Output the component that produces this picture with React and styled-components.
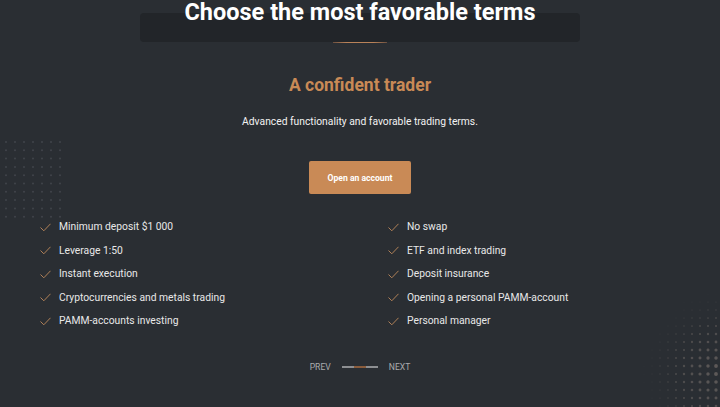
import React from "react";
import styled, { createGlobalStyle } from "styled-components";

const Global = createGlobalStyle`
  html, body { margin: 0; padding: 0; background: #2a2e33; }
  body { font-family: Roboto, "Liberation Sans", Arial, sans-serif; }
`;

const Page = styled.section`
  position: relative;
  width: 720px;
  height: 407px;
  overflow: hidden;
  background: #2a2e33;
  display: flex;
  flex-direction: column;
  align-items: center;
`;

const Decor = styled.svg`
  position: absolute;
  pointer-events: none;
`;

const Header = styled.header`
  position: relative;
  width: 440px;
  display: flex;
  flex-direction: column;
  align-items: center;
  margin-top: -2px;
  &::before {
    content: "";
    position: absolute;
    left: 0;
    right: 0;
    top: 15px;
    height: 29px;
    background: #222529;
    border-radius: 4px;
  }
`;

const Title = styled.h1`
  position: relative;
  margin: 0;
  font-size: 23.5px;
  line-height: 28px;
  font-weight: 700;
  color: #ffffff;
`;

const Rule = styled.div`
  position: relative;
  margin-top: 16px;
  width: 54px;
  height: 1px;
  background: linear-gradient(90deg, #6e5140, #b98259 25%, #b98259 75%, #6e5140);
`;

const Plan = styled.h2`
  margin: 31px 0 0;
  font-size: 17.5px;
  line-height: 22px;
  font-weight: 700;
  color: #c98a56;
`;

const Lead = styled.p`
  margin: 19px 0 0;
  font-size: 10.3px;
  line-height: 14px;
  color: #f2f2f2;
`;

const Cta = styled.button`
  margin-top: 32px;
  width: 102px;
  height: 33px;
  border: 0;
  border-radius: 2px;
  background: #c98a56;
  color: #ffffff;
  font-family: inherit;
  font-size: 8.6px;
  font-weight: 700;
  cursor: pointer;
`;

const Features = styled.ul`
  list-style: none;
  margin: 26px 0 0;
  padding: 0 40px;
  box-sizing: border-box;
  width: 100%;
  display: grid;
  grid-template-columns: 1fr 1fr;
  column-gap: 56px;
`;

const Column = styled.li`
  display: flex;
  flex-direction: column;
  gap: 9.5px;
`;

const Feature = styled.div`
  display: flex;
  align-items: center;
  gap: 8px;
  font-size: 10.3px;
  line-height: 14px;
  color: #e8e8e8;
`;

const Pager = styled.nav`
  margin-top: 33px;
  display: flex;
  align-items: center;
  gap: 11px;
  font-size: 8.6px;
  line-height: 12px;
  color: #a9abad;
`;

const Track = styled.div`
  width: 36px;
  height: 2px;
  background: linear-gradient(90deg, #8d8f92 0 33%, #8a5c3c 33% 67%, #8d8f92 67% 100%);
`;

const Check = () => (
  <svg width="11" height="9" viewBox="0 0 11 9" fill="none">
    <polyline points="0.5,4.5 3.8,7.8 10.5,0.8" stroke="#b08058" strokeWidth="1" />
  </svg>
);

const left = [
  "Minimum deposit $1 000",
  "Leverage 1:50",
  "Instant execution",
  "Cryptocurrencies and metals trading",
  "PAMM-accounts investing",
];

const right = [
  "No swap",
  "ETF and index trading",
  "Deposit insurance",
  "Opening a personal PAMM-account",
  "Personal manager",
];

// regular dot grid on the left edge
const gridDots = [];
for (let r = 0; r < 10; r++) {
  for (let c = 0; c < 7; c++) {
    gridDots.push(<circle key={`${r}-${c}`} cx={6 + c * 9} cy={142 + r * 8.3} r="1" fill="#41454b" />);
  }
}

// halftone fade in the bottom-right corner
const halftone = [];
for (let y = 286; y < 412; y += 8) {
  for (let x = 620; x < 724; x += 8) {
    const d = Math.hypot(724 - x, 372 - y);
    const rad = 2.1 - d / 45;
    if (rad > 0.3) {
      halftone.push(
        <circle key={`${x}-${y}`} cx={x} cy={y} r={rad} fill="#6a6462" opacity={Math.min(0.8, 0.2 + rad / 3.2)} />
      );
    }
  }
}

export default function App() {
  return (
    <>
      <Global />
      <Page>
        <Decor width="720" height="407" style={{ left: 0, top: 0 }}>
          {gridDots}
          {halftone}
        </Decor>
        <Header>
          <Title>Choose the most favorable terms</Title>
          <Rule />
        </Header>
        <Plan>A confident trader</Plan>
        <Lead>Advanced functionality and favorable trading terms.</Lead>
        <Cta>Open an account</Cta>
        <Features>
          <Column>
            {left.map((t) => (
              <Feature key={t}><Check />{t}</Feature>
            ))}
          </Column>
          <Column>
            {right.map((t) => (
              <Feature key={t}><Check />{t}</Feature>
            ))}
          </Column>
        </Features>
        <Pager>
          <span>PREV</span>
          <Track />
          <span>NEXT</span>
        </Pager>
      </Page>
    </>
  );
}
